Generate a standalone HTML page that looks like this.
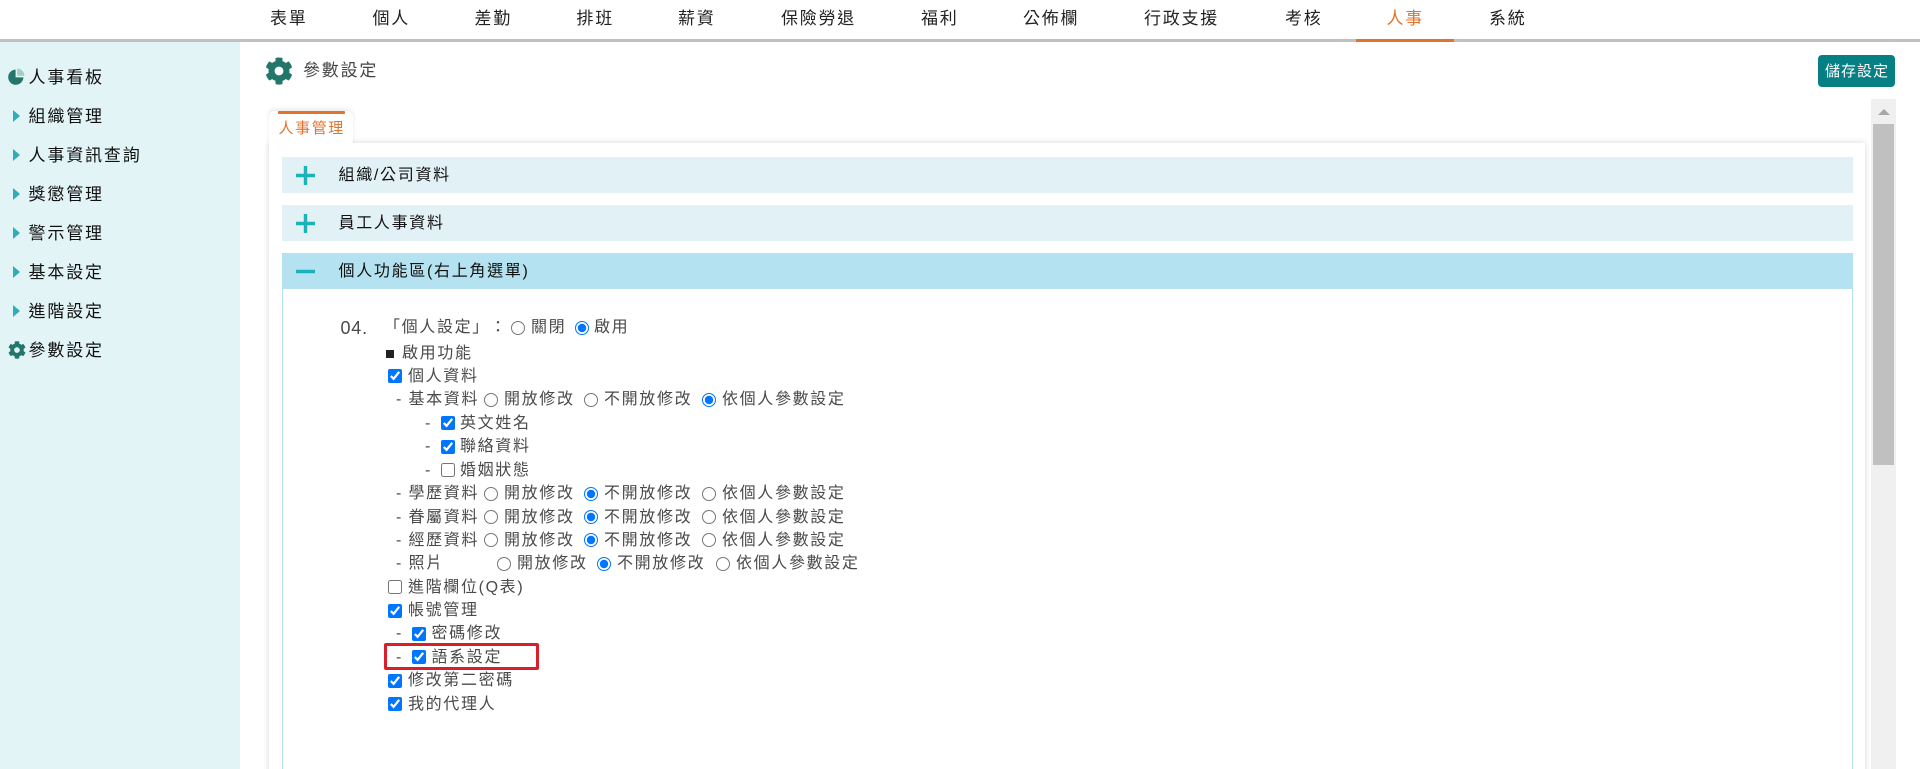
<!DOCTYPE html>
<html lang="zh-Hant"><head><meta charset="utf-8"><title>參數設定</title>
<style>
html,body{margin:0;padding:0;width:1920px;height:769px;overflow:hidden;background:#fff}
#w{position:absolute;left:0;top:0;width:1920px;height:769px;overflow:hidden;filter:blur(.3px)}
#w{font-family:"Liberation Sans","Noto Sans CJK TC",sans-serif;color:#444}
.a,.n,.s,.h,.t,input{position:absolute}
.n{top:7px;height:24px;line-height:24px;font-size:17px;letter-spacing:1.75px;color:#222;white-space:nowrap}
.s{left:28.5px;height:24px;line-height:24px;font-size:17px;letter-spacing:1.85px;color:#111;white-space:nowrap}
.h{left:338.5px;height:24px;line-height:24px;font-size:16px;letter-spacing:1.7px;color:#111;white-space:nowrap}
.t{height:24px;line-height:24px;font-size:16px;letter-spacing:1.65px;color:#4a4a4a;white-space:nowrap;margin-top:1px}
input{margin:0;width:14px;height:14px}
.tri{position:absolute;left:13px;width:0;height:0;border-left:7px solid #2fadb9;border-top:6.5px solid transparent;border-bottom:6.5px solid transparent}
.bar{position:absolute;left:282px;width:1571px;height:36px}
</style></head><body><div id="w">

<!-- top nav -->
<div class="a" style="left:0;top:39px;width:1920px;height:3px;background:#c0c0c0"></div>
<div class="a" style="left:1356px;top:39px;width:98px;height:3px;background:#e0742c"></div>
<div class="n" style="left:270px">表單</div>
<div class="n" style="left:372.5px">個人</div>
<div class="n" style="left:474.5px">差勤</div>
<div class="n" style="left:576.5px">排班</div>
<div class="n" style="left:678px">薪資</div>
<div class="n" style="left:781px">保險勞退</div>
<div class="n" style="left:921px">福利</div>
<div class="n" style="left:1023px">公佈欄</div>
<div class="n" style="left:1144px">行政支援</div>
<div class="n" style="left:1285px">考核</div>
<div class="n" style="left:1386.5px;color:#e0742c">人事</div>
<div class="n" style="left:1489px">系統</div>

<!-- sidebar -->
<div class="a" style="left:0;top:42px;width:240px;height:727px;background:#e3f4f6"></div>
<svg class="a" style="left:8px;top:68px" width="17" height="17" viewBox="0 0 17 17"><path d="M7.6 1.6A7.6 7.6 0 1 0 15.4 9.4H7.6Z" fill="#23776a"/><path d="M9.2 0.6A7.2 7.2 0 0 1 16.4 7.8H9.2Z" fill="#9fcfc6"/></svg>
<div class="s" style="top:65.5px">人事看板</div>
<div class="tri" style="top:110px"></div><div class="s" style="top:104.5px">組織管理</div>
<div class="tri" style="top:149px"></div><div class="s" style="top:143.5px">人事資訊查詢</div>
<div class="tri" style="top:188px"></div><div class="s" style="top:182.5px">獎懲管理</div>
<div class="tri" style="top:227px"></div><div class="s" style="top:221.5px">警示管理</div>
<div class="tri" style="top:266px"></div><div class="s" style="top:260.5px">基本設定</div>
<div class="tri" style="top:305px"></div><div class="s" style="top:299.5px">進階設定</div>
<svg class="a" style="left:7.5px;top:341px" width="18" height="18" viewBox="0 0 512 512"><path fill="#23776a" d="M487.4 315.7l-42.6-24.6c4.3-23.2 4.3-47 0-70.2l42.6-24.6c4.9-2.8 7.1-8.6 5.5-14-11.1-35.6-30-67.8-54.7-94.6-3.8-4.1-10-5.1-14.8-2.3L380.8 110c-17.9-15.4-38.5-27.3-60.8-35.1V25.8c0-5.6-3.9-10.5-9.4-11.7-36.7-8.2-74.3-7.8-109.2 0-5.5 1.2-9.4 6.1-9.4 11.7V75c-22.2 7.9-42.8 19.8-60.8 35.1L88.7 85.5c-4.9-2.8-11-1.9-14.8 2.3-24.7 26.7-43.6 58.9-54.7 94.6-1.7 5.4.6 11.2 5.5 14L67.3 221c-4.3 23.2-4.3 47 0 70.2l-42.6 24.6c-4.9 2.8-7.1 8.6-5.5 14 11.1 35.6 30 67.8 54.7 94.6 3.8 4.1 10 5.1 14.8 2.3l42.6-24.6c17.9 15.4 38.5 27.3 60.8 35.1v49.2c0 5.6 3.9 10.5 9.4 11.7 36.7 8.2 74.3 7.8 109.2 0 5.5-1.2 9.4-6.1 9.4-11.7v-49.2c22.2-7.9 42.8-19.8 60.8-35.1l42.6 24.6c4.9 2.8 11 1.9 14.8-2.3 24.7-26.7 43.6-58.9 54.7-94.6 1.5-5.5-.7-11.3-5.6-14.1zM256 336c-44.1 0-80-35.9-80-80s35.9-80 80-80 80 35.9 80 80-35.9 80-80 80z"/></svg>
<div class="s" style="top:338.5px">參數設定</div>

<!-- title -->
<svg class="a" style="left:265px;top:57px" width="28" height="28" viewBox="0 0 512 512"><path fill="#23776a" d="M487.4 315.7l-42.6-24.6c4.3-23.2 4.3-47 0-70.2l42.6-24.6c4.9-2.8 7.1-8.6 5.5-14-11.1-35.6-30-67.8-54.7-94.6-3.8-4.1-10-5.1-14.8-2.3L380.8 110c-17.9-15.4-38.5-27.3-60.8-35.1V25.8c0-5.6-3.9-10.5-9.4-11.7-36.7-8.2-74.3-7.8-109.2 0-5.5 1.2-9.4 6.1-9.4 11.7V75c-22.2 7.9-42.8 19.8-60.8 35.1L88.7 85.5c-4.9-2.8-11-1.9-14.8 2.3-24.7 26.7-43.6 58.9-54.7 94.6-1.7 5.4.6 11.2 5.5 14L67.3 221c-4.3 23.2-4.3 47 0 70.2l-42.6 24.6c-4.9 2.8-7.1 8.6-5.5 14 11.1 35.6 30 67.8 54.7 94.6 3.8 4.1 10 5.1 14.8 2.3l42.6-24.6c17.9 15.4 38.5 27.3 60.8 35.1v49.2c0 5.6 3.9 10.5 9.4 11.7 36.7 8.2 74.3 7.8 109.2 0 5.5-1.2 9.4-6.1 9.4-11.7v-49.2c22.2-7.9 42.8-19.8 60.8-35.1l42.6 24.6c4.9 2.8 11 1.9 14.8-2.3 24.7-26.7 43.6-58.9 54.7-94.6 1.5-5.5-.7-11.3-5.6-14.1zM256 336c-44.1 0-80-35.9-80-80s35.9-80 80-80 80 35.9 80 80-35.9 80-80 80z"/></svg>
<div class="t" style="left:303px;top:58px;font-size:17px;letter-spacing:1.8px;color:#444">參數設定</div>

<!-- save button -->
<div class="a" style="left:1818px;top:55px;width:77px;height:32px;background:#067f85;border-radius:4px;color:#fff;font-size:15px;line-height:34px;text-align:center;letter-spacing:1px;text-indent:1px">儲存設定</div>

<!-- panel -->
<div class="a" style="left:269px;top:143px;width:1596px;height:640px;background:#fff;box-shadow:0 0 6px rgba(0,0,0,.16)"></div>
<div class="a" style="left:269px;top:111px;width:84px;height:40px;background:#fff;border-radius:6px 6px 0 0;box-shadow:0 -2px 5px rgba(0,0,0,.09)"></div>
<div class="a" style="left:269px;top:143px;width:90px;height:12px;background:#fff"></div>
<div class="a" style="left:278px;top:111px;width:67px;height:3px;background:#e0742c;border-radius:1px"></div>
<div class="t" style="left:278.5px;top:116px;font-size:15px;letter-spacing:1.6px;color:#e0742c">人事管理</div>
<div class="a" style="left:1861px;top:143px;width:4px;height:626px;background:#fff"></div>

<!-- accordion -->
<div class="bar" style="top:157px;background:#e2f1f6"></div>
<div class="bar" style="top:205px;background:#e2f1f6"></div>
<div class="bar" style="top:253px;background:#b5e2f0"></div>
<div class="a" style="left:282px;top:289px;width:1px;height:480px;background:#b5e2f0"></div>
<div class="a" style="left:1852px;top:289px;width:1px;height:480px;background:#b5e2f0"></div>
<svg class="a" style="left:296px;top:166px" width="19" height="19"><path d="M9.5 0V19M0 9.5H19" stroke="#1db2b8" stroke-width="3.4"/></svg>
<svg class="a" style="left:296px;top:214px" width="19" height="19"><path d="M9.5 0V19M0 9.5H19" stroke="#1db2b8" stroke-width="3.4"/></svg>
<svg class="a" style="left:296px;top:262px" width="19" height="19"><path d="M0 9.5H19" stroke="#1db2b8" stroke-width="3.4"/></svg>
<div class="h" style="top:164px">組織/公司資料</div>
<div class="h" style="top:212px">員工人事資料</div>
<div class="h" style="top:260px">個人功能區(右上角選單)</div>

<!-- content -->
<div class="t" style="left:340.5px;top:315px;font-size:18px;letter-spacing:.8px">04.</div>
<div class="t" style="left:384px;top:315px">「個人設定」</div>
<div class="t" style="left:490px;top:315px">：</div>
<input type="radio" style="left:511px;top:321px"><div class="t" style="left:531px;top:315px">關閉</div>
<input type="radio" checked style="left:575px;top:321px"><div class="t" style="left:594px;top:315px">啟用</div>

<div class="a" style="left:386px;top:350px;width:8px;height:8px;background:#222"></div>
<div class="t" style="left:402px;top:341px">啟用功能</div>

<input type="checkbox" checked style="left:388px;top:369px"><div class="t" style="left:408px;top:364px">個人資料</div>

<div class="t" style="left:396px;top:387px">-</div><div class="t" style="left:408.5px;top:387px">基本資料</div>
<input type="radio" style="left:484px;top:393px"><div class="t" style="left:504px;top:387px">開放修改</div>
<input type="radio" style="left:584px;top:393px"><div class="t" style="left:604px;top:387px">不開放修改</div>
<input type="radio" checked style="left:702px;top:393px"><div class="t" style="left:722px;top:387px">依個人參數設定</div>

<div class="t" style="left:425px;top:411px">-</div><input type="checkbox" checked style="left:441px;top:416px"><div class="t" style="left:460px;top:411px">英文姓名</div>
<div class="t" style="left:425px;top:434px">-</div><input type="checkbox" checked style="left:441px;top:440px"><div class="t" style="left:460px;top:434px">聯絡資料</div>
<div class="t" style="left:425px;top:458px">-</div><input type="checkbox" style="left:441px;top:463px"><div class="t" style="left:460px;top:458px">婚姻狀態</div>

<div class="t" style="left:396px;top:481px">-</div><div class="t" style="left:408.5px;top:481px">學歷資料</div>
<input type="radio" style="left:484px;top:487px"><div class="t" style="left:504px;top:481px">開放修改</div>
<input type="radio" checked style="left:584px;top:487px"><div class="t" style="left:604px;top:481px">不開放修改</div>
<input type="radio" style="left:702px;top:487px"><div class="t" style="left:722px;top:481px">依個人參數設定</div>

<div class="t" style="left:396px;top:505px">-</div><div class="t" style="left:408.5px;top:505px">眷屬資料</div>
<input type="radio" style="left:484px;top:510px"><div class="t" style="left:504px;top:505px">開放修改</div>
<input type="radio" checked style="left:584px;top:510px"><div class="t" style="left:604px;top:505px">不開放修改</div>
<input type="radio" style="left:702px;top:510px"><div class="t" style="left:722px;top:505px">依個人參數設定</div>

<div class="t" style="left:396px;top:528px">-</div><div class="t" style="left:408.5px;top:528px">經歷資料</div>
<input type="radio" style="left:484px;top:533px"><div class="t" style="left:504px;top:528px">開放修改</div>
<input type="radio" checked style="left:584px;top:533px"><div class="t" style="left:604px;top:528px">不開放修改</div>
<input type="radio" style="left:702px;top:533px"><div class="t" style="left:722px;top:528px">依個人參數設定</div>

<div class="t" style="left:396px;top:551px">-</div><div class="t" style="left:408.5px;top:551px">照片</div>
<input type="radio" style="left:497px;top:557px"><div class="t" style="left:517px;top:551px">開放修改</div>
<input type="radio" checked style="left:597px;top:557px"><div class="t" style="left:617px;top:551px">不開放修改</div>
<input type="radio" style="left:716px;top:557px"><div class="t" style="left:736px;top:551px">依個人參數設定</div>

<input type="checkbox" style="left:388px;top:580px"><div class="t" style="left:408px;top:575px">進階欄位(Q表)</div>
<input type="checkbox" checked style="left:388px;top:604px"><div class="t" style="left:408px;top:598px">帳號管理</div>
<div class="t" style="left:396px;top:621px">-</div><input type="checkbox" checked style="left:411.5px;top:627px"><div class="t" style="left:431.5px;top:621px">密碼修改</div>
<div class="t" style="left:396px;top:645px">-</div><input type="checkbox" checked style="left:411.5px;top:650px"><div class="t" style="left:431.5px;top:645px">語系設定</div>
<div class="a" style="left:384px;top:642.5px;width:149px;height:21.5px;border:3px solid #d91f2a;border-radius:2px"></div>
<input type="checkbox" checked style="left:388px;top:674px"><div class="t" style="left:408px;top:668px">修改第二密碼</div>
<input type="checkbox" checked style="left:388px;top:697px"><div class="t" style="left:408px;top:692px">我的代理人</div>

<!-- scrollbar -->
<div class="a" style="left:1871px;top:99px;width:25px;height:670px;background:#f0f0f0"></div>
<div class="a" style="left:1873px;top:124px;width:21px;height:341px;background:#c0c0c0"></div>
<div class="a" style="left:1878px;top:109px;width:0;height:0;border-left:6px solid transparent;border-right:6px solid transparent;border-bottom:6px solid #a8a8a8"></div>
</div></body></html>
